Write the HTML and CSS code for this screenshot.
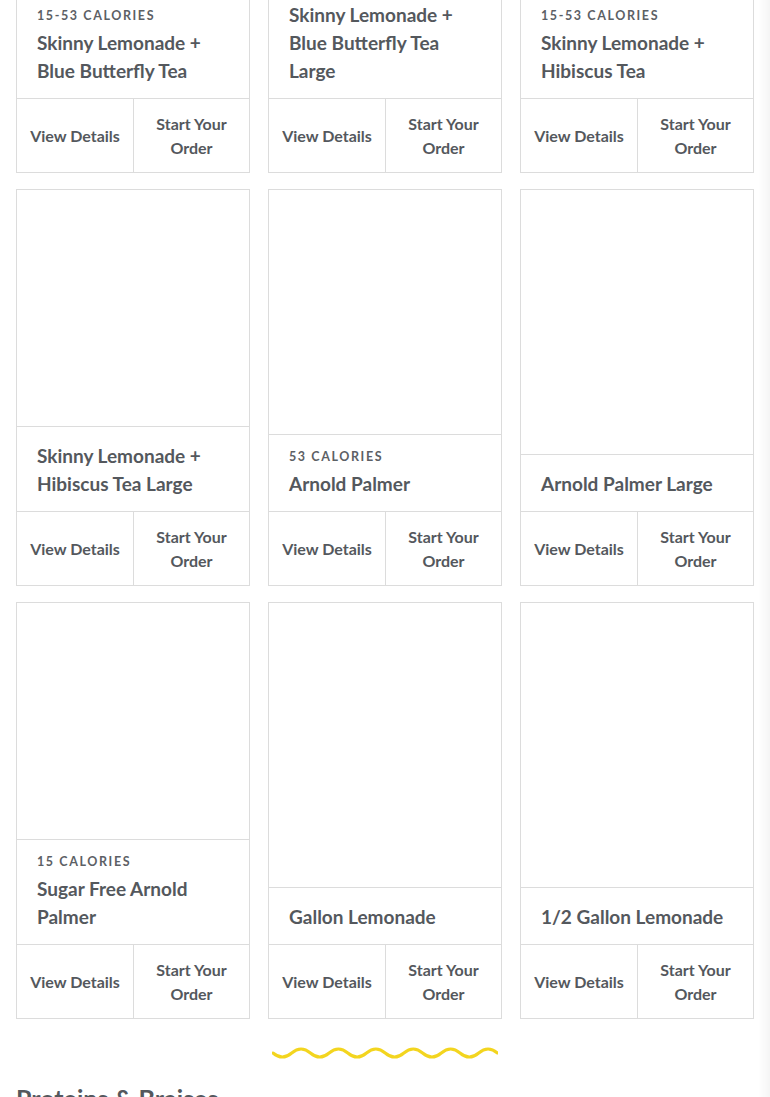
FILE: index.html
```html
<!DOCTYPE html>
<html lang="en">
<head>
    <meta charset="UTF-8">
    <meta name="viewport" content="width=device-width, initial-scale=1.0">
    <title>Lemonades &amp; Teas</title>
    <link rel="stylesheet" href="styles.css">
</head>
<body>
    <div class="menu-page">
        <div class="menu-grid">
            <div class="menu-card">
                <div class="card-photo"></div>
                <div class="card-info">
                    <div class="card-calories">15-53 Calories</div>
                    <div class="card-title">Skinny Lemonade + Blue Butterfly Tea</div>
                </div>
                <div class="card-actions">
                    <a href="#">View Details</a>
                    <a href="#">Start Your Order</a>
                </div>
            </div>
            <div class="menu-card">
                <div class="card-photo"></div>
                <div class="card-info">
                    <div class="card-title">Skinny Lemonade + Blue Butterfly Tea Large</div>
                </div>
                <div class="card-actions">
                    <a href="#">View Details</a>
                    <a href="#">Start Your Order</a>
                </div>
            </div>
            <div class="menu-card">
                <div class="card-photo"></div>
                <div class="card-info">
                    <div class="card-calories">15-53 Calories</div>
                    <div class="card-title">Skinny Lemonade + Hibiscus Tea</div>
                </div>
                <div class="card-actions">
                    <a href="#">View Details</a>
                    <a href="#">Start Your Order</a>
                </div>
            </div>

            <div class="menu-card">
                <div class="card-photo"></div>
                <div class="card-info">
                    <div class="card-title">Skinny Lemonade + Hibiscus Tea Large</div>
                </div>
                <div class="card-actions">
                    <a href="#">View Details</a>
                    <a href="#">Start Your Order</a>
                </div>
            </div>
            <div class="menu-card">
                <div class="card-photo"></div>
                <div class="card-info">
                    <div class="card-calories">53 Calories</div>
                    <div class="card-title">Arnold Palmer</div>
                </div>
                <div class="card-actions">
                    <a href="#">View Details</a>
                    <a href="#">Start Your Order</a>
                </div>
            </div>
            <div class="menu-card">
                <div class="card-photo"></div>
                <div class="card-info">
                    <div class="card-title">Arnold Palmer Large</div>
                </div>
                <div class="card-actions">
                    <a href="#">View Details</a>
                    <a href="#">Start Your Order</a>
                </div>
            </div>

            <div class="menu-card">
                <div class="card-photo"></div>
                <div class="card-info">
                    <div class="card-calories">15 Calories</div>
                    <div class="card-title">Sugar Free Arnold Palmer</div>
                </div>
                <div class="card-actions">
                    <a href="#">View Details</a>
                    <a href="#">Start Your Order</a>
                </div>
            </div>
            <div class="menu-card">
                <div class="card-photo"></div>
                <div class="card-info">
                    <div class="card-title">Gallon Lemonade</div>
                </div>
                <div class="card-actions">
                    <a href="#">View Details</a>
                    <a href="#">Start Your Order</a>
                </div>
            </div>
            <div class="menu-card">
                <div class="card-photo"></div>
                <div class="card-info">
                    <div class="card-title">1/2 Gallon Lemonade</div>
                </div>
                <div class="card-actions">
                    <a href="#">View Details</a>
                    <a href="#">Start Your Order</a>
                </div>
            </div>
        </div>

        <div class="squiggle">
            <svg width="226" height="14" viewBox="0 0 226 14">
                <path d="M1 6 q 9.35 8 18.7 0 t 18.7 0 t 18.7 0 t 18.7 0 t 18.7 0 t 18.7 0 t 18.7 0 t 18.7 0 t 18.7 0 t 18.7 0 t 18.7 0 t 18.7 0" fill="none" stroke="#f3d51f" stroke-width="3" stroke-linecap="round"/>
            </svg>
        </div>

        <h2 class="section-title">Proteins &amp; Braises</h2>
    </div>
</body>
</html>
```

FILE: styles.css
```css
* {
    margin: 0;
    padding: 0;
    box-sizing: border-box;
}

body {
    font-family: Lato, "Noto Sans", sans-serif;
    background: #fff;
    color: #54585d;
    overflow: hidden;
}

/* faint shade down the right edge */
body::after {
    content: "";
    position: fixed;
    top: 0;
    right: 0;
    width: 12px;
    height: 100%;
    background: linear-gradient(to right, rgba(0, 0, 0, 0), rgba(0, 0, 0, 0.04));
}

a {
    text-decoration: none;
    color: inherit;
}

.menu-page {
    padding: 0 16px;
    margin-top: -252px;
}

.menu-grid {
    display: grid;
    grid-template-columns: repeat(3, 234px);
    column-gap: 18px;
    row-gap: 16px;
}

.menu-card {
    display: flex;
    flex-direction: column;
    border: 1px solid #dcdcdc;
}

.card-photo {
    flex: 1;
    min-height: 236px;
}

.card-info {
    border-top: 1px solid #dcdcdc;
    padding: 15px 20px 13px;
}

.card-calories {
    font-size: 12.5px;
    font-weight: 700;
    letter-spacing: 1.6px;
    text-transform: uppercase;
    line-height: 14px;
    margin-bottom: 6px;
    color: #5c6065;
}

.card-title {
    font-size: 19px;
    font-weight: 700;
    line-height: 28px;
}

.card-actions {
    display: grid;
    grid-template-columns: 1fr 1fr;
    border-top: 1px solid #dcdcdc;
    height: 74px;
}

.card-actions a {
    display: flex;
    align-items: center;
    justify-content: center;
    text-align: center;
    padding: 0 16px;
    font-size: 16px;
    font-weight: 700;
    line-height: 24px;
}

.card-actions a:first-child {
    padding: 0 6px;
}

.card-actions a + a {
    border-left: 1px solid #dcdcdc;
}

.squiggle {
    display: flex;
    justify-content: center;
    margin-top: 28px;
}

.section-title {
    font-size: 25px;
    font-weight: 700;
    margin-top: 22px;
}
```
